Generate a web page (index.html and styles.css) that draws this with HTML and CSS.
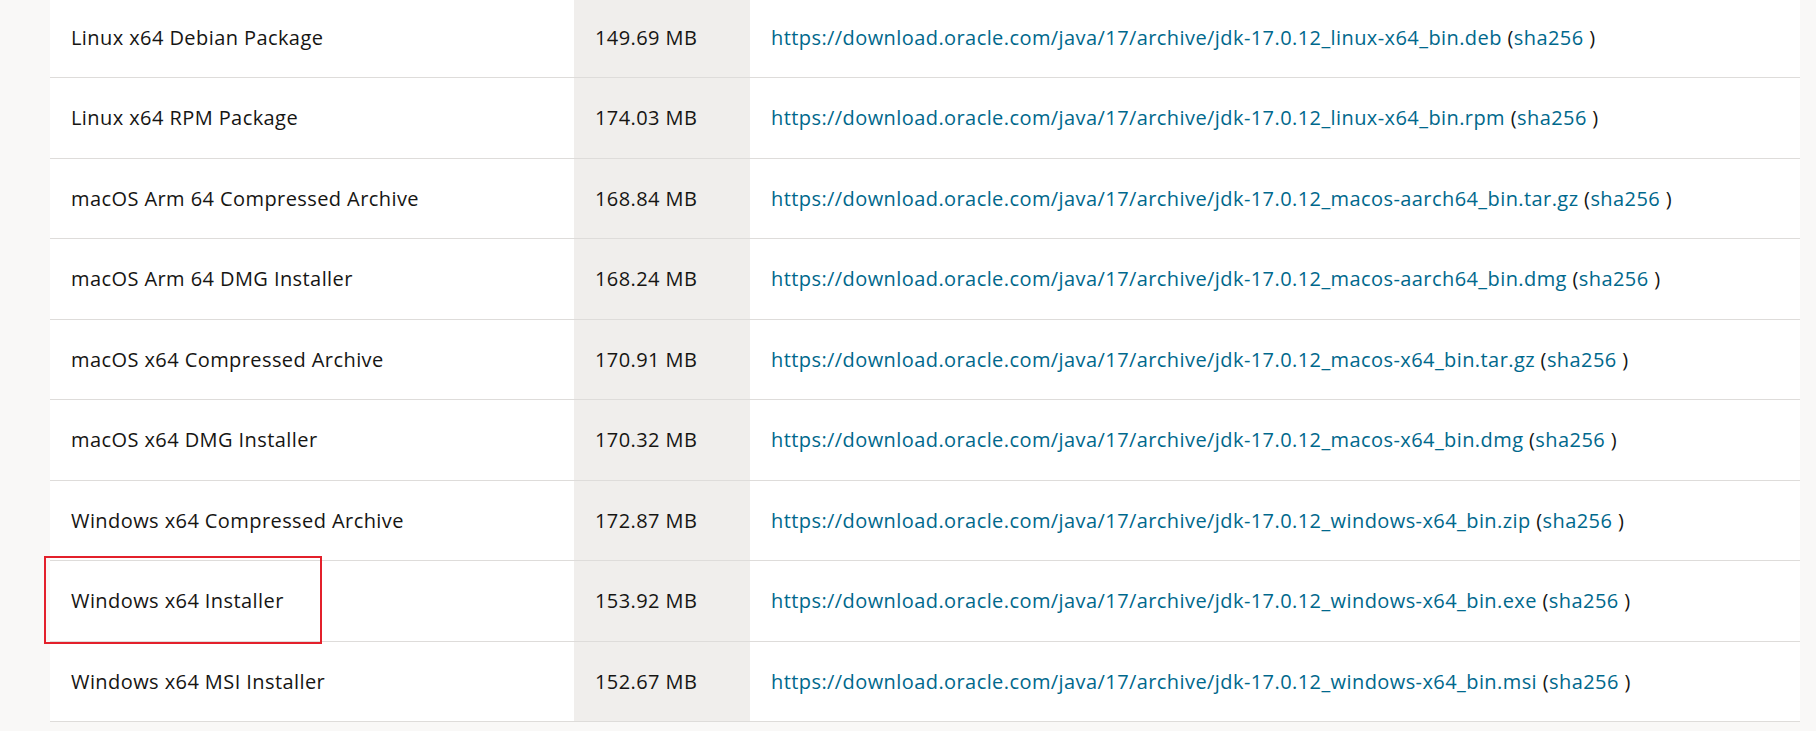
FILE: index.html
```html
<!DOCTYPE html>
<html>
<head>
<meta charset="utf-8">
<link rel="stylesheet" href="styles.css">
</head>
<body>
<div class="page">
<table class="downloads">
<tbody>
<tr><td class="name">Linux x64 Debian Package</td><td class="size">149.69 MB</td><td class="link"><a href="#">https://download.oracle.com/java/17/archive/jdk-17.0.12_linux-x64_bin.deb</a> (<a href="#">sha256</a> )</td></tr>
<tr><td class="name">Linux x64 RPM Package</td><td class="size">174.03 MB</td><td class="link"><a href="#">https://download.oracle.com/java/17/archive/jdk-17.0.12_linux-x64_bin.rpm</a> (<a href="#">sha256</a> )</td></tr>
<tr><td class="name">macOS Arm 64 Compressed Archive</td><td class="size">168.84 MB</td><td class="link"><a href="#">https://download.oracle.com/java/17/archive/jdk-17.0.12_macos-aarch64_bin.tar.gz</a> (<a href="#">sha256</a> )</td></tr>
<tr><td class="name">macOS Arm 64 DMG Installer</td><td class="size">168.24 MB</td><td class="link"><a href="#">https://download.oracle.com/java/17/archive/jdk-17.0.12_macos-aarch64_bin.dmg</a> (<a href="#">sha256</a> )</td></tr>
<tr><td class="name">macOS x64 Compressed Archive</td><td class="size">170.91 MB</td><td class="link"><a href="#">https://download.oracle.com/java/17/archive/jdk-17.0.12_macos-x64_bin.tar.gz</a> (<a href="#">sha256</a> )</td></tr>
<tr><td class="name">macOS x64 DMG Installer</td><td class="size">170.32 MB</td><td class="link"><a href="#">https://download.oracle.com/java/17/archive/jdk-17.0.12_macos-x64_bin.dmg</a> (<a href="#">sha256</a> )</td></tr>
<tr><td class="name">Windows x64 Compressed Archive</td><td class="size">172.87 MB</td><td class="link"><a href="#">https://download.oracle.com/java/17/archive/jdk-17.0.12_windows-x64_bin.zip</a> (<a href="#">sha256</a> )</td></tr>
<tr><td class="name highlighted"><span class="mark"></span>Windows x64 Installer</td><td class="size">153.92 MB</td><td class="link"><a href="#">https://download.oracle.com/java/17/archive/jdk-17.0.12_windows-x64_bin.exe</a> (<a href="#">sha256</a> )</td></tr>
<tr><td class="name">Windows x64 MSI Installer</td><td class="size">152.67 MB</td><td class="link"><a href="#">https://download.oracle.com/java/17/archive/jdk-17.0.12_windows-x64_bin.msi</a> (<a href="#">sha256</a> )</td></tr>
</tbody>
</table>
</div>
</body>
</html>
```
FILE: styles.css
```css
html, body {
  margin: 0;
  padding: 0;
  background: #f9f8f7;
}
body {
  font-family: "Open Sans", "Noto Sans", sans-serif;
  font-size: 20px;
  letter-spacing: 0.42px;
  color: #161513;
  overflow: hidden;
}
.page {
  padding: 0 16px 0 50px;
  margin-top: -2.5px;
}
.downloads {
  width: 1750px;
  border-collapse: collapse;
  background: #ffffff;
}
.downloads td {
  padding: 26.25px 21px;
  line-height: 27px;
  border-bottom: 1px solid #dedcda;
  white-space: nowrap;
  text-align: left;
  vertical-align: middle;
}
.downloads td.name {
  width: 482px;
}
.downloads td.size {
  width: 134px;
  background: #f0eeec;
}
.downloads td.link {
  width: auto;
}
.downloads a {
  color: #00688c;
  text-decoration: none;
}
.highlighted {
  position: relative;
}
.mark {
  position: absolute;
  left: -6px;
  top: -5px;
  width: 274px;
  height: 84px;
  border: 2px solid #e3202b;
  pointer-events: none;
}
```
